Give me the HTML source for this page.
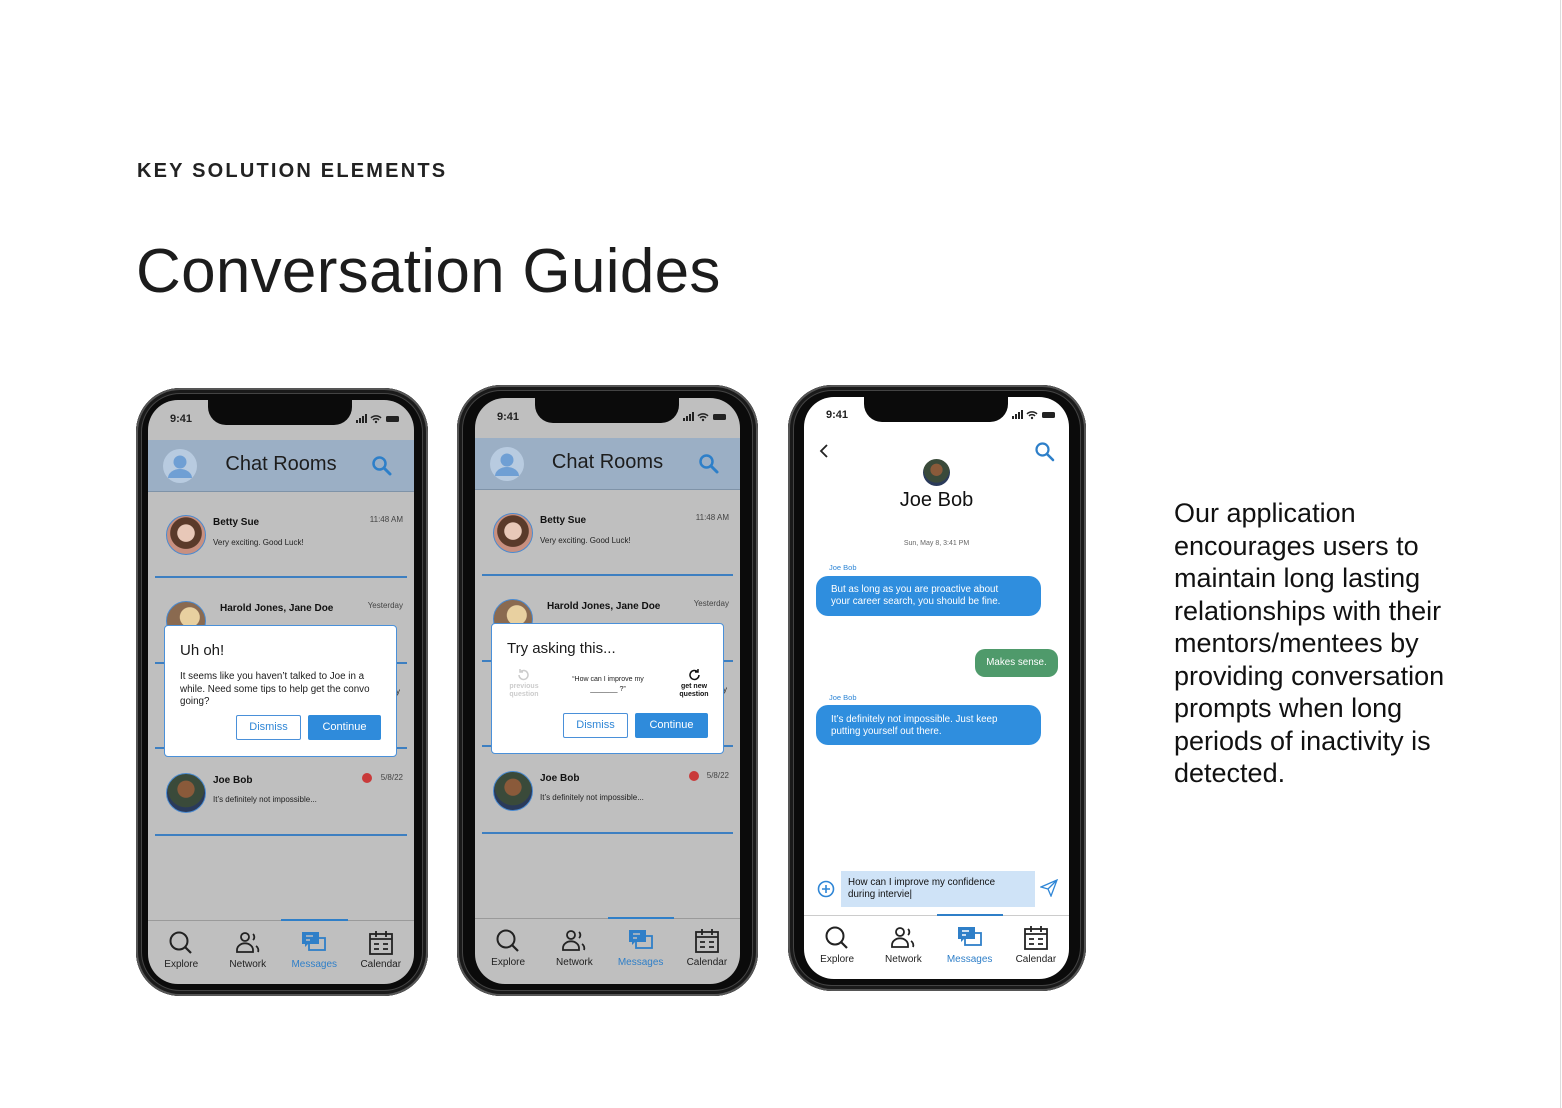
<!DOCTYPE html>
<html><head><meta charset="utf-8">
<style>
*{margin:0;padding:0;box-sizing:border-box}
body{width:1562px;height:1108px;background:#fff;position:relative;overflow:hidden;font-family:"Liberation Sans",sans-serif;color:#1a1a1a}
.abs{position:absolute}
.kicker{left:137px;top:160px;font-size:20px;font-weight:bold;letter-spacing:2.2px;color:#222}
.title{left:136px;top:236px;font-size:62px;letter-spacing:0.3px;color:#1c1c1c;white-space:nowrap}
.para{left:1174px;top:497px;font-size:27px;line-height:32.5px;color:#111;white-space:nowrap}
.phone{position:absolute;background:#0b0b0b;border-radius:44px;box-shadow:inset 0 0 0 2px #555,inset 0 0 0 5px #1a1a1a,inset 0 0 0 6px #444}
.screen{position:absolute;overflow:hidden;border-radius:30px;background:#bfbfbf}
.notch{position:absolute;top:0;height:25px;background:#0b0b0b;border-radius:0 0 18px 18px}
.time{position:absolute;font-size:11px;font-weight:bold;color:#222}
.sig{position:absolute;top:14px}
.hdr{position:absolute;left:0;right:0;top:40px;height:52px;background:#9bafc5;border-bottom:1px solid #7f93a8}
.hdr .t{position:absolute;left:0;right:0;top:13px;text-align:center;font-size:20px;color:#1d1d1d}
.sep{position:absolute;left:7px;right:7px;height:2px;background:#3d7fc1}
.av{position:absolute;width:40px;height:40px;border-radius:50%;border:1.5px solid #4a8ad0;overflow:hidden}
.nm{position:absolute;font-size:10px;font-weight:bold;color:#111}
.ms{position:absolute;font-size:8px;color:#222}
.tm{position:absolute;font-size:8px;color:#444;right:11px}
.dlg{position:absolute;background:#fff;border:1.5px solid #4a90d9;border-radius:4px}
.btn{position:absolute;height:25px;font-size:11px;text-align:center;line-height:23px;border-radius:2px}
.b1{border:1px solid #4a90d9;color:#2f86d6;background:#fff}
.b2{background:#2f8bdb;color:#fff;line-height:25px}
.tab{position:absolute;left:0;right:0;height:64px;border-top:1.5px solid #9a9a9a}
.ti{position:absolute;top:0;width:25%;height:64px;text-align:center}
.ti svg{position:absolute;left:50%;margin-left:-13px;top:9px}
.ti span{position:absolute;left:0;right:0;top:38px;font-size:10px;color:#222}
.ti.on span{color:#2f7fc8}
.ti.on:before{content:"";position:absolute;left:0;right:0;top:-2px;height:2px;background:#2f7fc8}
</style></head><body>
<div class="abs kicker">KEY SOLUTION ELEMENTS</div>
<div class="abs title">Conversation Guides</div>
<div class="abs para">Our application<br>encourages users to<br>maintain long lasting<br>relationships with their<br>mentors/mentees by<br>providing conversation<br>prompts when long<br>periods of inactivity is<br>detected.</div>
<div class="abs" style="left:1560px;top:0;width:1px;height:1108px;background:#ddd"></div>

<!-- PHONE 1 -->
<div class="phone" style="left:136px;top:388px;width:292px;height:608px"></div>
<div class="screen" style="left:148px;top:400px;width:266px;height:584px">
 <div class="notch" style="left:60px;width:144px"></div>
 <div class="time" style="left:22px;top:13px">9:41</div>
 <svg class="sig" style="left:208px" width="46" height="10"><rect x="0" y="6" width="2" height="3" fill="#222"/><rect x="3" y="4" width="2" height="5" fill="#222"/><rect x="6" y="2" width="2" height="7" fill="#222"/><rect x="9" y="0" width="2" height="9" fill="#222"/><path d="M15 4a7 7 0 0 1 10 0M17 6a4 4 0 0 1 6 0" stroke="#222" stroke-width="1.5" fill="none"/><circle cx="20" cy="8" r="1.2" fill="#222"/><rect x="30" y="2" width="13" height="6" rx="1.5" fill="#222"/></svg>
 <div class="hdr"><svg style="position:absolute;left:14px;top:8px" width="36" height="36"><circle cx="18" cy="18" r="17" fill="#b8cbe0"/><circle cx="18" cy="14" r="6.5" fill="#6f9fd4"/><path d="M6 30a12 9 0 0 1 24 0z" fill="#6f9fd4"/></svg><div class="t">Chat Rooms</div><svg style="position:absolute;left:223px;top:15px" width="22" height="22"><circle cx="8.5" cy="8.5" r="6" stroke="#2d7fc9" stroke-width="2.5" fill="none"/><path d="M13 13l6 6" stroke="#2d7fc9" stroke-width="3" stroke-linecap="round"/></svg></div>
 <div class="av" style="left:18px;top:115px;background:radial-gradient(circle at 50% 45%,#e8c8b8 0 30%,#5a3a2a 32% 55%,#c89080 57%)"></div>
 <div class="nm" style="left:65px;top:117px">Betty Sue</div><div class="ms" style="left:65px;top:138px">Very exciting. Good Luck!</div><div class="tm" style="top:115px">11:48 AM</div>
 <div class="sep" style="top:176px"></div>
 <div class="av" style="left:18px;top:201px;background:radial-gradient(circle at 60% 40%,#e8d0a0 0 30%,#8a6a50 32%)"></div>
 <div class="nm" style="left:72px;top:203px">Harold Jones, Jane Doe</div><div class="tm" style="top:201px">Yesterday</div>
 <div class="sep" style="top:262px;height:1.5px"></div><div class="sep" style="top:347px;height:1.5px"></div>
 <div class="ms" style="left:248px;top:287px">y</div>
 <div class="dlg" style="left:16px;top:225px;width:233px;height:132px">
  <div class="abs" style="left:15px;top:16px;font-size:15px">Uh oh!</div>
  <div class="abs" style="left:15px;top:45px;font-size:9.8px;line-height:12.5px;width:203px">It seems like you haven’t talked to Joe in a while. Need some tips to help get the convo going?</div>
  <div class="btn b1" style="left:71px;top:89px;width:65px">Dismiss</div>
  <div class="btn b2" style="left:143px;top:89px;width:73px">Continue</div>
 </div>
 <div class="av" style="left:18px;top:373px;background:radial-gradient(circle at 50% 40%,#8a5a3a 0 28%,#3a4a3a 30% 60%,#2a3a5a 62%)"></div>
 <div class="nm" style="left:65px;top:375px">Joe Bob</div><div class="ms" style="left:65px;top:395px">It’s definitely not impossible...</div><div class="tm" style="top:373px">5/8/22</div>
 <div class="abs" style="left:214px;top:373px;width:10px;height:10px;border-radius:50%;background:#c93a3a"></div>
 <div class="sep" style="top:434px"></div>
 <div class="tab" style="top:520px">
  <div class="ti" style="left:0"><svg width="26" height="26"><circle cx="11" cy="11" r="8.5" stroke="#222" stroke-width="2" fill="none"/><path d="M17 17l6 6" stroke="#222" stroke-width="2.2"/></svg><span>Explore</span></div>
  <div class="ti" style="left:25%"><svg width="26" height="26"><circle cx="10" cy="7" r="4" stroke="#222" stroke-width="1.8" fill="none"/><path d="M2 22v-2a6 5 0 0 1 16 0v2z" stroke="#222" stroke-width="1.8" fill="none"/><path d="M18 4a4 4 0 0 1 0 6M21 16a5 5 0 0 1 2 6" stroke="#222" stroke-width="1.8" fill="none"/></svg><span>Network</span></div>
  <div class="ti on" style="left:50%"><svg width="26" height="26"><rect x="8" y="8" width="16" height="12" fill="none" stroke="#2f7fc8" stroke-width="1.8"/><path d="M1 2h17v12H7l-3 3v-3H1z" fill="#2f7fc8"/><path d="M5 6h7M5 10h4" stroke="#bfbfbf" stroke-width="1.6"/></svg><span>Messages</span></div>
  <div class="ti" style="left:75%"><svg width="26" height="26"><rect x="2" y="4" width="22" height="20" fill="none" stroke="#222" stroke-width="1.8"/><path d="M2 9h22M8 1v6M18 1v6M6 14h5M15 14h5M6 19h5M15 19h5" stroke="#222" stroke-width="1.8"/></svg><span>Calendar</span></div>
 </div>
</div>

<!-- PHONE 2 -->
<div class="phone" style="left:457px;top:385px;width:301px;height:611px"></div>
<div class="screen" style="left:475px;top:398px;width:265px;height:586px">
 <div class="notch" style="left:60px;width:144px"></div>
 <div class="time" style="left:22px;top:13px">9:41</div>
 <svg class="sig" style="left:208px" width="46" height="10"><rect x="0" y="6" width="2" height="3" fill="#222"/><rect x="3" y="4" width="2" height="5" fill="#222"/><rect x="6" y="2" width="2" height="7" fill="#222"/><rect x="9" y="0" width="2" height="9" fill="#222"/><path d="M15 4a7 7 0 0 1 10 0M17 6a4 4 0 0 1 6 0" stroke="#222" stroke-width="1.5" fill="none"/><circle cx="20" cy="8" r="1.2" fill="#222"/><rect x="30" y="2" width="13" height="6" rx="1.5" fill="#222"/></svg>
 <div class="hdr"><svg style="position:absolute;left:14px;top:8px" width="36" height="36"><circle cx="18" cy="18" r="17" fill="#b8cbe0"/><circle cx="18" cy="14" r="6.5" fill="#6f9fd4"/><path d="M6 30a12 9 0 0 1 24 0z" fill="#6f9fd4"/></svg><div class="t">Chat Rooms</div><svg style="position:absolute;left:223px;top:15px" width="22" height="22"><circle cx="8.5" cy="8.5" r="6" stroke="#2d7fc9" stroke-width="2.5" fill="none"/><path d="M13 13l6 6" stroke="#2d7fc9" stroke-width="3" stroke-linecap="round"/></svg></div>
 <div class="av" style="left:18px;top:115px;background:radial-gradient(circle at 50% 45%,#e8c8b8 0 30%,#5a3a2a 32% 55%,#c89080 57%)"></div>
 <div class="nm" style="left:65px;top:117px">Betty Sue</div><div class="ms" style="left:65px;top:138px">Very exciting. Good Luck!</div><div class="tm" style="top:115px">11:48 AM</div>
 <div class="sep" style="top:176px"></div>
 <div class="av" style="left:18px;top:201px;background:radial-gradient(circle at 60% 40%,#e8d0a0 0 30%,#8a6a50 32%)"></div>
 <div class="nm" style="left:72px;top:203px">Harold Jones, Jane Doe</div><div class="tm" style="top:201px">Yesterday</div>
 <div class="sep" style="top:262px;height:1.5px"></div><div class="sep" style="top:347px;height:1.5px"></div>
 <div class="ms" style="left:248px;top:287px">y</div>
 <div class="dlg" style="left:16px;top:225px;width:233px;height:131px">
  <div class="abs" style="left:15px;top:16px;font-size:15px">Try asking this...</div>
  <svg class="abs" style="left:24px;top:44px" width="14" height="14"><path d="M3 7a4.5 4.5 0 1 0 1.5-3.4M4 1v3h3" stroke="#ccc" stroke-width="1.5" fill="none"/></svg>
  <div class="abs" style="left:10px;top:59px;width:44px;text-align:center;font-size:7px;line-height:8px;color:#ccc;font-weight:bold">previous question</div>
  <div class="abs" style="left:60px;top:51px;width:112px;text-align:center;font-size:7px;line-height:10px;color:#222">“How can I improve my<br>_______ ?”</div>
  <svg class="abs" style="left:196px;top:44px" width="14" height="14"><path d="M11 7a4.5 4.5 0 1 1-1.5-3.4M10 1v3H7" stroke="#111" stroke-width="1.5" fill="none"/></svg>
  <div class="abs" style="left:180px;top:59px;width:44px;text-align:center;font-size:7px;line-height:8px;color:#111;font-weight:bold">get new question</div>
  <div class="btn b1" style="left:71px;top:89px;width:65px">Dismiss</div>
  <div class="btn b2" style="left:143px;top:89px;width:73px">Continue</div>
 </div>
 <div class="av" style="left:18px;top:373px;background:radial-gradient(circle at 50% 40%,#8a5a3a 0 28%,#3a4a3a 30% 60%,#2a3a5a 62%)"></div>
 <div class="nm" style="left:65px;top:375px">Joe Bob</div><div class="ms" style="left:65px;top:395px">It’s definitely not impossible...</div><div class="tm" style="top:373px">5/8/22</div>
 <div class="abs" style="left:214px;top:373px;width:10px;height:10px;border-radius:50%;background:#c93a3a"></div>
 <div class="sep" style="top:434px"></div>
 <div class="tab" style="top:520px">
  <div class="ti" style="left:0"><svg width="26" height="26"><circle cx="11" cy="11" r="8.5" stroke="#222" stroke-width="2" fill="none"/><path d="M17 17l6 6" stroke="#222" stroke-width="2.2"/></svg><span>Explore</span></div>
  <div class="ti" style="left:25%"><svg width="26" height="26"><circle cx="10" cy="7" r="4" stroke="#222" stroke-width="1.8" fill="none"/><path d="M2 22v-2a6 5 0 0 1 16 0v2z" stroke="#222" stroke-width="1.8" fill="none"/><path d="M18 4a4 4 0 0 1 0 6M21 16a5 5 0 0 1 2 6" stroke="#222" stroke-width="1.8" fill="none"/></svg><span>Network</span></div>
  <div class="ti on" style="left:50%"><svg width="26" height="26"><rect x="8" y="8" width="16" height="12" fill="none" stroke="#2f7fc8" stroke-width="1.8"/><path d="M1 2h17v12H7l-3 3v-3H1z" fill="#2f7fc8"/><path d="M5 6h7M5 10h4" stroke="#bfbfbf" stroke-width="1.6"/></svg><span>Messages</span></div>
  <div class="ti" style="left:75%"><svg width="26" height="26"><rect x="2" y="4" width="22" height="20" fill="none" stroke="#222" stroke-width="1.8"/><path d="M2 9h22M8 1v6M18 1v6M6 14h5M15 14h5M6 19h5M15 19h5" stroke="#222" stroke-width="1.8"/></svg><span>Calendar</span></div>
 </div>
</div>

<!-- PHONE 3 -->
<div class="phone" style="left:788px;top:385px;width:298px;height:606px"></div>
<div class="screen" style="left:804px;top:397px;width:265px;height:582px;background:#fff">
 <div class="notch" style="left:60px;width:144px"></div>
 <div class="time" style="left:22px;top:12px">9:41</div>
 <svg class="sig" style="left:208px;top:13px" width="46" height="10"><rect x="0" y="6" width="2" height="3" fill="#222"/><rect x="3" y="4" width="2" height="5" fill="#222"/><rect x="6" y="2" width="2" height="7" fill="#222"/><rect x="9" y="0" width="2" height="9" fill="#222"/><path d="M15 4a7 7 0 0 1 10 0M17 6a4 4 0 0 1 6 0" stroke="#222" stroke-width="1.5" fill="none"/><circle cx="20" cy="8" r="1.2" fill="#222"/><rect x="30" y="2" width="13" height="6" rx="1.5" fill="#222"/></svg>
 <svg class="abs" style="left:14px;top:46px" width="12" height="16"><path d="M9 2L3 8l6 6" stroke="#222" stroke-width="1.8" fill="none"/></svg>
 <svg class="abs" style="left:230px;top:44px" width="22" height="22"><circle cx="8.5" cy="8.5" r="6" stroke="#2d7fc9" stroke-width="2.2" fill="none"/><path d="M13 13l6 6" stroke="#2d7fc9" stroke-width="2.6" stroke-linecap="round"/></svg>
 <div class="abs" style="left:119px;top:62px;width:27px;height:27px;border-radius:50%;background:radial-gradient(circle at 50% 40%,#8a5a3a 0 28%,#3a4a3a 30% 60%,#2a3a5a 62%)"></div>
 <div class="abs" style="left:0;right:0;top:92px;text-align:center;font-size:20px;color:#111">Joe Bob</div>
 <div class="abs" style="left:0;right:0;top:143px;text-align:center;font-size:7px;color:#666">Sun, May 8, 3:41 PM</div>
 <div class="abs" style="left:25px;top:166px;font-size:7.5px;color:#2f86d6">Joe Bob</div>
 <div class="abs" style="left:12px;top:179px;width:225px;height:40px;background:#2f8ede;border-radius:12px;color:#fff;font-size:9.8px;line-height:12px;padding:8px 0 0 15px">But as long as you are proactive about<br>your career search, you should be fine.</div>
 <div class="abs" style="left:171px;top:252px;width:83px;height:28px;background:#4f9a6b;border-radius:10px;color:#fff;font-size:9.8px;line-height:28px;text-align:center">Makes sense.</div>
 <div class="abs" style="left:25px;top:296px;font-size:7.5px;color:#2f86d6">Joe Bob</div>
 <div class="abs" style="left:12px;top:308px;width:225px;height:40px;background:#2f8ede;border-radius:12px;color:#fff;font-size:9.8px;line-height:12px;padding:9px 0 0 15px">It’s definitely not impossible. Just keep<br>putting yourself out there.</div>
 <svg class="abs" style="left:13px;top:483px" width="18" height="18"><circle cx="9" cy="9" r="7.5" stroke="#2f86d6" stroke-width="1.6" fill="none"/><path d="M9 5v8M5 9h8" stroke="#2f86d6" stroke-width="1.6"/></svg>
 <div class="abs" style="left:37px;top:474px;width:194px;height:36px;background:#cfe3f7;font-size:9.8px;line-height:12px;padding:6px 0 0 7px;color:#111">How can I improve my confidence<br>during intervie|</div>
 <svg class="abs" style="left:236px;top:482px" width="18" height="18"><path d="M1 8L17 1 11 17 8 10z M8 10L17 1" stroke="#2f86d6" stroke-width="1.3" fill="none"/></svg>
 <div class="tab" style="top:518px;border-top-color:#ccc">
  <div class="ti" style="left:0"><svg width="26" height="26"><circle cx="11" cy="11" r="8.5" stroke="#222" stroke-width="2" fill="none"/><path d="M17 17l6 6" stroke="#222" stroke-width="2.2"/></svg><span>Explore</span></div>
  <div class="ti" style="left:25%"><svg width="26" height="26"><circle cx="10" cy="7" r="4" stroke="#222" stroke-width="1.8" fill="none"/><path d="M2 22v-2a6 5 0 0 1 16 0v2z" stroke="#222" stroke-width="1.8" fill="none"/><path d="M18 4a4 4 0 0 1 0 6M21 16a5 5 0 0 1 2 6" stroke="#222" stroke-width="1.8" fill="none"/></svg><span>Network</span></div>
  <div class="ti on" style="left:50%"><svg width="26" height="26"><rect x="8" y="8" width="16" height="12" fill="none" stroke="#2f7fc8" stroke-width="1.8"/><path d="M1 2h17v12H7l-3 3v-3H1z" fill="#2f7fc8"/><path d="M5 6h7M5 10h4" stroke="#fff" stroke-width="1.6"/></svg><span>Messages</span></div>
  <div class="ti" style="left:75%"><svg width="26" height="26"><rect x="2" y="4" width="22" height="20" fill="none" stroke="#222" stroke-width="1.8"/><path d="M2 9h22M8 1v6M18 1v6M6 14h5M15 14h5M6 19h5M15 19h5" stroke="#222" stroke-width="1.8"/></svg><span>Calendar</span></div>
 </div>
</div>
</body></html>
